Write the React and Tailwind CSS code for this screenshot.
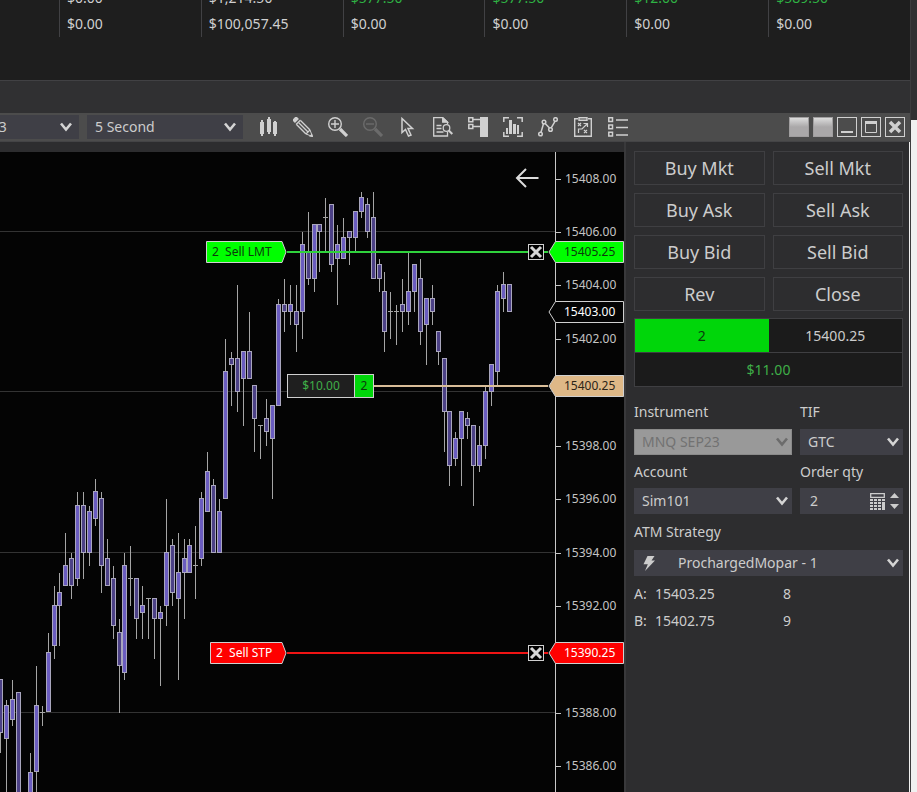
import React, { useState } from "react";

const accountColumns = [
  { realized: "$0.00", total: "$0.00" },
  { realized: "$1,214.50", total: "$100,057.45" },
  { realized: "$577.50", total: "$0.00", gain: true },
  { realized: "$577.50", total: "$0.00", gain: true },
  { realized: "$12.00", total: "$0.00", gain: true },
  { realized: "$589.50", total: "$0.00", gain: true },
];

// Candles: [x, high, bodyTop, bodyBottom, low, rising]
const candles = [
  [0, 527, 527, 581, 601, 0],
  [6, 548, 553, 587, 640, 1],
  [12, 528, 547, 568, 574, 1],
  [18, 540, 540, 648, 648, 0],
  [30, 601, 620, 648, 648, 1],
  [36, 514, 553, 620, 640, 1],
  [42, 554, 560, 560, 574, 1],
  [48, 481, 500, 560, 560, 1],
  [54, 434, 453, 494, 507, 1],
  [59, 421, 440, 454, 494, 1],
  [65, 381, 413, 434, 434, 1],
  [71, 401, 406, 434, 447, 0],
  [77, 340, 353, 427, 434, 1],
  [83, 340, 353, 401, 427, 0],
  [89, 354, 359, 401, 414, 1],
  [95, 327, 339, 367, 374, 1],
  [101, 340, 346, 414, 441, 0],
  [107, 387, 406, 434, 434, 0],
  [113, 414, 426, 474, 487, 0],
  [119, 467, 480, 514, 561, 0],
  [124, 401, 413, 521, 528, 1],
  [130, 394, 426, 426, 454, 1],
  [136, 426, 426, 467, 487, 0],
  [142, 434, 453, 461, 487, 1],
  [148, 446, 446, 446, 487, 0],
  [154, 446, 446, 467, 507, 0],
  [160, 454, 460, 467, 534, 1],
  [166, 347, 400, 454, 474, 1],
  [172, 387, 393, 441, 454, 0],
  [178, 381, 420, 447, 528, 1],
  [184, 387, 406, 421, 467, 1],
  [189, 387, 393, 421, 421, 1],
  [195, 374, 413, 413, 447, 1],
  [201, 340, 346, 407, 414, 1],
  [207, 300, 319, 360, 360, 1],
  [213, 327, 333, 401, 401, 0],
  [219, 347, 359, 401, 401, 1],
  [225, 187, 219, 347, 347, 1],
  [231, 200, 206, 213, 254, 0],
  [237, 133, 206, 240, 260, 0],
  [243, 199, 199, 227, 274, 1],
  [249, 160, 199, 227, 227, 0],
  [254, 233, 233, 267, 300, 0],
  [260, 273, 273, 273, 307, 0],
  [266, 247, 266, 280, 294, 0],
  [272, 253, 253, 287, 347, 1],
  [278, 147, 152, 254, 254, 1],
  [284, 127, 152, 160, 180, 0],
  [290, 133, 152, 160, 173, 1],
  [296, 133, 159, 173, 200, 0],
  [302, 80, 92, 160, 187, 1],
  [308, 60, 100, 127, 133, 0],
  [314, 72, 72, 127, 140, 1],
  [319, 72, 72, 80, 120, 0],
  [325, 46, 65, 65, 99, 1],
  [331, 52, 52, 113, 120, 0],
  [337, 73, 92, 107, 153, 1],
  [343, 66, 85, 107, 107, 1],
  [349, 79, 79, 86, 113, 0],
  [355, 59, 59, 86, 99, 1],
  [361, 40, 45, 60, 66, 1],
  [367, 46, 52, 80, 86, 0],
  [373, 40, 65, 127, 127, 0],
  [379, 107, 112, 127, 140, 0],
  [384, 120, 139, 180, 200, 0],
  [390, 140, 159, 159, 187, 1],
  [396, 153, 159, 159, 193, 1],
  [402, 127, 152, 160, 180, 0],
  [408, 101, 139, 160, 173, 1],
  [414, 112, 112, 140, 160, 1],
  [420, 107, 126, 180, 193, 0],
  [426, 146, 146, 173, 213, 1],
  [432, 133, 146, 160, 173, 0],
  [438, 179, 179, 200, 213, 0],
  [444, 206, 206, 260, 300, 0],
  [449, 259, 259, 314, 334, 0],
  [455, 280, 286, 307, 314, 1],
  [461, 259, 259, 287, 334, 1],
  [467, 260, 266, 274, 287, 0],
  [473, 273, 273, 314, 354, 0],
  [479, 274, 293, 314, 320, 1],
  [485, 234, 239, 294, 307, 1],
  [491, 212, 212, 240, 254, 1],
  [497, 133, 139, 220, 233, 1],
  [503, 120, 132, 147, 160, 1],
  [509, 132, 132, 160, 160, 0],
];

const axisPrices = [
  15408, 15406, 15404, 15402, 15400, 15398, 15396, 15394, 15392, 15390, 15388,
  15386,
];
const gridPrices = [15406, 15400, 15394, 15388];

const PIXELS_PER_POINT = 26.72;
const priceToY = (price) => Math.floor(26 + (15408 - price) * PIXELS_PER_POINT);

const Chevron = ({ className = "" }) => (
  <svg
    viewBox="0 0 12 10"
    className={`pointer-events-none absolute top-1/2 h-[10px] w-3 -translate-y-1/2 ${className}`}
    fill="none"
    stroke="currentColor"
    strokeWidth="2.6"
  >
    <path d="M1 1.5 6 7.5 11 1.5" />
  </svg>
);

const Dropdown = ({
  id,
  label,
  options,
  className = "",
  selectClass = "pl-2",
  chevronClass = "right-1",
  disabled,
  children,
}) => (
  <div className={`relative ${className}`}>
    <select
      id={id}
      aria-label={label}
      disabled={disabled}
      className={`block h-full w-full appearance-none pr-5 text-sm outline-none disabled:opacity-100 ${
        disabled
          ? "border border-[#8a8a8a] bg-[#999999] text-[#727272]"
          : "bg-[#3f3f46] text-[#cccccc]"
      } ${selectClass}`}
    >
      {options.map((option) => (
        <option key={option}>{option}</option>
      ))}
    </select>
    {children}
    <Chevron className={`${chevronClass} ${disabled ? "text-[#6c6c6c]" : "text-[#d4d4d4]"}`} />
  </div>
);

const tools = [
  {
    name: "Chart style",
    icon: (
      <g fill="currentColor">
        <path d="M2 5h4v12H2zM9 2h4v13H9zM15 5h4v12h-4z" />
        <path d="M3 3h2v16H3zM10 0h2v17h-2zM16 4h2v15h-2z" />
      </g>
    ),
  },
  {
    name: "Drawing tools",
    icon: (
      <g fill="none" stroke="currentColor">
        <path d="M0.500 4.500 4.500 0.500" strokeWidth="4" />
        <path d="M3.500 7.500 13 17 M7.500 3.500 17 13 M5.500 5.500 15 15" strokeWidth="1.400" />
        <path d="M3 7.500 7.500 3M13 17l4-4" strokeWidth="1.200" />
        <path d="M13 17l4-4 2.500 6.500z" strokeWidth="1" />
        <path d="M16 19.500l3-3 1 3.500z" fill="currentColor" stroke="none" />
      </g>
    ),
  },
  {
    name: "Zoom in",
    icon: (
      <g fill="none" stroke="currentColor">
        <circle cx="7" cy="7" r="6.300" strokeWidth="1.400" />
        <path d="M7 3v8M3 7h8" strokeWidth="1.400" />
        <path d="M12 12l7 7" strokeWidth="3.200" />
      </g>
    ),
  },
  {
    name: "Zoom out",
    disabled: true,
    icon: (
      <g fill="none" stroke="currentColor">
        <circle cx="7" cy="7" r="6.300" strokeWidth="1.400" />
        <path d="M3 7h8" strokeWidth="1.400" />
        <path d="M12 12l7 7" strokeWidth="3.200" />
      </g>
    ),
  },
  {
    name: "Cursor",
    icon: (
      <path
        d="M4 1.500v14l3.500-3 3 6.500 2.500-1-3-6.500h4.500z"
        fill="none"
        stroke="currentColor"
        strokeWidth="1.500"
      />
    ),
  },
  {
    name: "Data box",
    icon: (
      <g fill="none" stroke="currentColor" strokeWidth="1.300">
        <path d="M14.500 15v4H0.700V0.700h9l4.800 4.500v2" />
        <path d="M9.700 0.700v4.500h4.800z" fill="currentColor" />
        <path d="M3.500 8.500h5M3.500 11.500h5M3.500 15h7" strokeWidth="1.500" />
        <circle cx="13.500" cy="11" r="3.300" />
        <path d="M15.800 13.500l3.500 3.500" strokeWidth="2" />
      </g>
    ),
  },
  {
    name: "Chart trader",
    icon: (
      <g fill="none" stroke="currentColor" strokeWidth="1.500">
        <path d="M0.800 0.800h4v4h-4zM0.800 7.500h4v4h-4zM5 2.500h8M5 9.500h8" />
        <path d="M12 0h8v20h-8z" fill="currentColor" stroke="none" />
      </g>
    ),
  },
  {
    name: "Data series",
    icon: (
      <g fill="none" stroke="currentColor" strokeWidth="1.500">
        <path d="M0.800 5V0.800H6M14 0.800h5.200V5M0.800 15v4.200H6M14 19.200h5.200V15" />
        <path
          d="M3 11h2v6H3zM6 3h3v14H6zM10 7h3v10h-3zM14 8h2v9h-2z"
          fill="currentColor"
          stroke="none"
        />
      </g>
    ),
  },
  {
    name: "Indicators",
    icon: (
      <g fill="none" stroke="currentColor" strokeWidth="1.500">
        <circle cx="2.500" cy="17" r="1.800" />
        <circle cx="6" cy="5" r="1.800" />
        <circle cx="12.500" cy="12.500" r="1.800" />
        <circle cx="17.500" cy="2.500" r="1.800" />
        <path d="M3 15.200 5.500 6.800M7.200 6.500l4.300 4.500M13.200 10.800 17 4.300" />
      </g>
    ),
  },
  {
    name: "Strategies",
    icon: (
      <g fill="none" stroke="currentColor" strokeWidth="1.400">
        <path d="M5 1.700H1.700v17.500h16.600V1.700H15" />
        <path d="M6 0.700h8v2.500H6z" />
        <path
          d="M5 6l3 3M8 6l-3 3M11 13l3 3M14 13l-3 3M5.500 16v-4H9l5-5M10.500 6.500H14.500V10"
          strokeWidth="1.200"
        />
      </g>
    ),
  },
  {
    name: "Properties",
    icon: (
      <g fill="none" stroke="currentColor" strokeWidth="1.500">
        <path d="M0.800 0.800h3.700v3.700H0.800zM0.800 8h3.700v3.700H0.800zM0.800 15.300h3.700V19H0.800z" />
        <path d="M8 3h12M8 10.500h12M8 18h12" strokeWidth="1.600" />
      </g>
    ),
  },
];

const AccountTable = () => (
  <div className="h-[81px] shrink-0 overflow-hidden border-b border-[#414144] bg-[#1e1e1e]">
    <table className="-mt-[15px] w-full table-fixed border-separate border-spacing-0 text-left text-sm text-[#d0d0d0]">
      <colgroup>
        <col className="w-[59px]" />
      </colgroup>
      <tbody>
        <tr className="h-[26px]">
          <td />
          {accountColumns.map((column, i) => (
            <td
              key={i}
              className={`border-l border-[#414144] py-0 pl-[7px] ${column.gain ? "text-[#2fb344]" : ""}`}
            >
              {column.realized}
            </td>
          ))}
        </tr>
        <tr className="h-[26px]">
          <td />
          {accountColumns.map((column, i) => (
            <td key={i} className="border-l border-[#414144] py-0 pl-[7px]">
              {column.total}
            </td>
          ))}
        </tr>
      </tbody>
    </table>
  </div>
);

const Toolbar = () => (
  <header className="flex h-[29px] shrink-0 items-center border-b border-[#444446] bg-[#4c4c4c]">
    <Dropdown
      label="Chart instrument"
      options={["MNQ SEP23"]}
      className="-ml-[79px] h-6 w-[158px] shrink-0"
      chevronClass="right-[7px]"
    />
    <Dropdown
      label="Interval"
      options={["5 Second", "1 Minute", "5 Minute"]}
      className="ml-2 h-6 w-[156px] shrink-0"
      chevronClass="right-[7px]"
    />
    <div className="ml-[15px] flex gap-[15px]">
      {tools.map((tool) => (
        <button
          key={tool.name}
          type="button"
          aria-label={tool.name}
          disabled={tool.disabled}
          className="size-5 text-[#d0d0d0] disabled:text-[#6b6b6b]"
        >
          <svg viewBox="0 0 20 20" className="size-5">
            {tool.icon}
          </svg>
        </button>
      ))}
    </div>
    <div className="ml-auto mr-[5px] flex gap-1 text-[#d0d0d0]">
      <button
        type="button"
        aria-label="Link instrument"
        className="size-5 border border-[#a09e9f] bg-linear-to-b from-[#dcdcdc] to-[#aaa8a9] to-50%"
      />
      <button
        type="button"
        aria-label="Link interval"
        className="size-5 border border-[#a09e9f] bg-linear-to-b from-[#dcdcdc] to-[#aaa8a9] to-50%"
      />
      <button type="button" aria-label="Minimize" className="size-5 border border-current">
        <svg viewBox="0 0 18 18">
          <path d="M3 13h12v2H3z" fill="currentColor" />
        </svg>
      </button>
      <button type="button" aria-label="Maximize" className="size-5 border border-current">
        <svg viewBox="0 0 18 18" fill="none" stroke="currentColor">
          <path d="M3.500 3.500h11v11h-11z" />
          <path d="M3 4.500h12" strokeWidth="3" />
        </svg>
      </button>
      <button type="button" aria-label="Close window" className="size-5 border border-current">
        <svg viewBox="0 0 18 18" stroke="currentColor" strokeWidth="3.500">
          <path d="M4 4l10 10M14 4 4 14" />
        </svg>
      </button>
    </div>
  </header>
);

const PriceFlag = ({ price, fill, textClass }) => (
  <div className="relative z-10 h-[22px] w-[76px] shrink-0">
    <svg viewBox="0 0 76 22" className="absolute inset-0 h-full w-full">
      <path d="M1 11 7.500 0.500h68v21h-68z" fill={fill} stroke="#d0d0d0" />
    </svg>
    <span className={`relative block pl-4 text-xs leading-[22px] ${textClass}`}>{price}</span>
  </div>
);

const CancelButton = () => (
  <button
    type="button"
    aria-label="Cancel order"
    className="size-4 shrink-0 border border-[#d0d0d0] bg-black text-[#d8d8d8]"
  >
    <svg viewBox="0 0 14 14" stroke="currentColor" strokeWidth="3">
      <path d="M2 2l10 10M12 2 2 12" />
    </svg>
  </button>
);

// Working order: name tag, line, cancel button and its price on the axis
const OrderLine = ({ order, fill, lineClass, tagClass, tagWidth, textClass, price }) => (
  <div
    className="absolute inset-x-0 flex h-[22px] items-center"
    style={{ top: priceToY(Number(price)) - 10 }}
  >
    <div className="flex w-[287px] shrink-0 justify-end">
      <div className={`relative h-[22px] ${tagWidth}`}>
        <svg viewBox={`0 0 ${order.width} 22`} className="absolute inset-0 h-full w-full">
          <path
            d={`M0.500 0.500H${order.width - 5}L${order.width - 1} 11L${order.width - 5} 21.500H0.500z`}
            fill={fill}
            stroke="#d0d0d0"
          />
        </svg>
        <span className={`relative block whitespace-pre pl-[6px] text-xs leading-[22px] ${tagClass}`}>
          {order.text}
        </span>
      </div>
    </div>
    <div className={`h-[2px] flex-1 ${lineClass}`} />
    <CancelButton />
    <div className={`h-[2px] w-1 ${lineClass}`} />
    <PriceFlag price={price} fill={fill} textClass={textClass} />
  </div>
);

const Chart = () => (
  <section className="relative mt-[10px] flex min-w-0 flex-1 overflow-hidden bg-[#040404]">
    <div className="relative min-w-0 flex-1 overflow-hidden">
      {gridPrices.map((price) => (
        <div
          key={price}
          className="absolute inset-x-0 h-px bg-[#333333]"
          style={{ top: priceToY(price) }}
        />
      ))}
      <svg width="555" height="640" className="absolute left-0 top-0" shapeRendering="crispEdges">
        {candles.map(([x, high, top, bottom, low, rising]) => (
          <g key={x}>
            <rect x={x} y={high} width="1" height={low - high} fill="#a5a5a5" />
            {top === bottom ? (
              <rect x={x - 2} y={top} width="5" height="1" fill="#a5a5a5" />
            ) : (
              <rect
                x={x - 1.5}
                y={top + 0.5}
                width="4"
                height={bottom - top - 1}
                fill={rising ? "#6a5cbf" : "#4c4186"}
                stroke="#a9a6bd"
              />
            )}
          </g>
        ))}
      </svg>
      <button
        type="button"
        aria-label="Scroll back"
        className="absolute right-4 top-4 text-[#dcdcdc]"
      >
        <svg width="24" height="20" viewBox="0 0 24 20" fill="none" stroke="currentColor" strokeWidth="2">
          <path d="M23.500 10H2M11 1 2 10l9 9" />
        </svg>
      </button>
    </div>

    <div className="relative w-[69px] shrink-0 border-l border-[#c8c8c8] text-xs text-[#c4c4c4]">
      {axisPrices.map((price) => (
        <div
          key={price}
          className="absolute left-0 flex h-4 items-center gap-1"
          style={{ top: priceToY(price) - 7 }}
        >
          <span className="h-px w-[5px] bg-[#c8c8c8]" />
          <span className="leading-4">{price.toFixed(2)}</span>
        </div>
      ))}
    </div>

    <OrderLine
      order={{ text: "2  Sell LMT", width: 81 }}
      price="15405.25"
      fill="#00ff00"
      tagWidth="w-[81px]"
      lineClass="bg-[#2fd23c]"
      tagClass="text-[#0c3a0c]"
      textClass="text-[#0c3a0c]"
    />
    <OrderLine
      order={{ text: "2  Sell STP", width: 77 }}
      price="15390.25"
      fill="#ff0000"
      tagWidth="w-[77px]"
      lineClass="bg-[#f01414]"
      tagClass="text-white"
      textClass="text-white"
    />

    {/* Open position */}
    <div
      className="absolute inset-x-0 flex h-6 items-center pl-[287px]"
      style={{ top: priceToY(15400.25) - 11 }}
    >
      <div className="flex h-6 w-[87px] shrink-0 border border-[#d0d0d0] text-center text-xs leading-[22px]">
        <span className="flex-1 bg-[#1f1f1f] text-[#3fae48]">$10.00</span>
        <span className="w-[19px] border-l border-[#d0d0d0] bg-[#00d60a] text-[#0c3a0c]">2</span>
      </div>
      <div className="h-[2px] flex-1 bg-[#d9bd98]" />
      <PriceFlag price="15400.25" fill="#deb887" textClass="text-[#2c2418]" />
    </div>

    {/* Last price */}
    <div className="absolute right-0" style={{ top: priceToY(15403) - 10 }}>
      <PriceFlag price="15403.00" fill="#040404" textClass="text-white" />
    </div>
  </section>
);

const tradeButtons = [
  "Buy Mkt",
  "Sell Mkt",
  "Buy Ask",
  "Sell Ask",
  "Buy Bid",
  "Sell Bid",
  "Rev",
  "Close",
];

const TradePanel = () => {
  const [quantity, setQuantity] = useState(2);

  return (
    <aside className="w-[286px] shrink-0 border-l-2 border-r border-l-[#39393b] border-r-[#f0f0f0] bg-[#2d2d2f] pl-2 pr-[6px] pt-[9px] text-sm leading-5 text-[#cccccc]">
      <div className="grid grid-cols-2 gap-2">
        {tradeButtons.map((name) => (
          <button
            key={name}
            type="button"
            className="h-[34px] border border-[#3f3f42] text-lg leading-6 hover:bg-[#3f3f46]"
          >
            {name}
          </button>
        ))}
      </div>

      <div className="mt-[7px] grid grid-cols-2 border border-[#3f3f42] bg-[#1b1b1b] text-center leading-[33px]">
        <div className="bg-[#00d60a] text-[#0c3a0c]">2</div>
        <div>15400.25</div>
        <div className="col-span-2 border-t border-[#3f3f42] text-[#3fae48]">$11.00</div>
      </div>

      <div className="mt-[15px] grid grid-cols-[158px_minmax(0,1fr)] gap-x-2">
        <label htmlFor="instrument">Instrument</label>
        <label htmlFor="tif">TIF</label>
        <Dropdown
          id="instrument"
          options={["MNQ SEP23"]}
          disabled
          className="mt-[7px] h-[26px]"
          selectClass="pl-[7px]"
        />
        <Dropdown id="tif" options={["GTC", "DAY"]} className="mt-[7px] h-[26px]" />

        <label htmlFor="account" className="mt-[7px]">
          Account
        </label>
        <label htmlFor="quantity" className="mt-[7px]">
          Order qty
        </label>
        <Dropdown id="account" options={["Sim101"]} className="mt-[6px] h-[26px]" />
        <div className="mt-[6px] flex h-[26px] items-center bg-[#3f3f46] pr-1">
          <input
            id="quantity"
            type="text"
            value={quantity}
            onChange={(e) => setQuantity(Number(e.target.value) || 0)}
            className="min-w-0 flex-1 bg-transparent pl-[10px] outline-none"
          />
          <button type="button" aria-label="Calculator" className="mr-[5px]">
            <svg width="15" height="17" viewBox="0 0 15 17" fill="currentColor">
              <path
                d="M0.700 0.700h13.600v3.600H0.700z"
                fill="none"
                stroke="currentColor"
                strokeWidth="1.300"
              />
              <path d="M0 6h3v2H0zM4 6h3v2H4zM8 6h3v2H8zM12 6h3v2h-3zM0 9h3v2H0zM4 9h3v2H4zM8 9h3v2H8zM12 9h3v8h-3zM0 12h3v2H0zM4 12h3v2H4zM8 12h3v2H8zM0 15h3v2H0zM4 15h3v2H4zM8 15h3v2H8z" />
            </svg>
          </button>
          <div className="flex w-[9px] flex-col gap-[6px]">
            <button type="button" aria-label="Increase" onClick={() => setQuantity(quantity + 1)}>
              <svg viewBox="0 0 9 5" fill="currentColor">
                <path d="M0 5 4.500 0 9 5z" />
              </svg>
            </button>
            <button type="button" aria-label="Decrease" onClick={() => setQuantity(quantity - 1)}>
              <svg viewBox="0 0 9 5" fill="currentColor">
                <path d="M0 0 4.500 5 9 0z" />
              </svg>
            </button>
          </div>
        </div>
      </div>

      <label htmlFor="atm" className="mt-2 block">
        ATM Strategy
      </label>
      <Dropdown
        id="atm"
        options={["ProchargedMopar - 1", "None"]}
        className="mt-2 h-[26px]"
        selectClass="pl-[44px]"
      >
        <svg
          width="12"
          height="15"
          viewBox="0 0 12 15"
          className="pointer-events-none absolute left-[9px] top-[6px]"
          fill="currentColor"
        >
          <path d="M4.500 0H11.500L8.500 4.500H12L2 15 4.800 8.300H0.500z" />
        </svg>
      </Dropdown>

      <dl className="mt-2 grid grid-cols-[21px_128px_1fr] gap-y-[7px]">
        <dt>A:</dt>
        <dd>15403.25</dd>
        <dd>8</dd>
        <dt>B:</dt>
        <dd>15402.75</dd>
        <dd>9</dd>
      </dl>
    </aside>
  );
};

const App = () => {
  return (
    <div className="flex h-screen overflow-hidden bg-[#2d2d2f] font-['Noto_Sans','Open_Sans',sans-serif]">
      <div className="flex min-w-0 flex-1 flex-col border-r border-[#3c3c3e]">
        <AccountTable />
        <div className="h-8 shrink-0 bg-[#303032]" />
        <Toolbar />
        <main className="flex min-h-0 flex-1">
          <Chart />
          <TradePanel />
        </main>
      </div>
      <div className="w-[6px] shrink-0 bg-[#f0f0f0]">
        <div className="h-[120px] bg-[#303032]" />
      </div>
    </div>
  );
};

export default App;
